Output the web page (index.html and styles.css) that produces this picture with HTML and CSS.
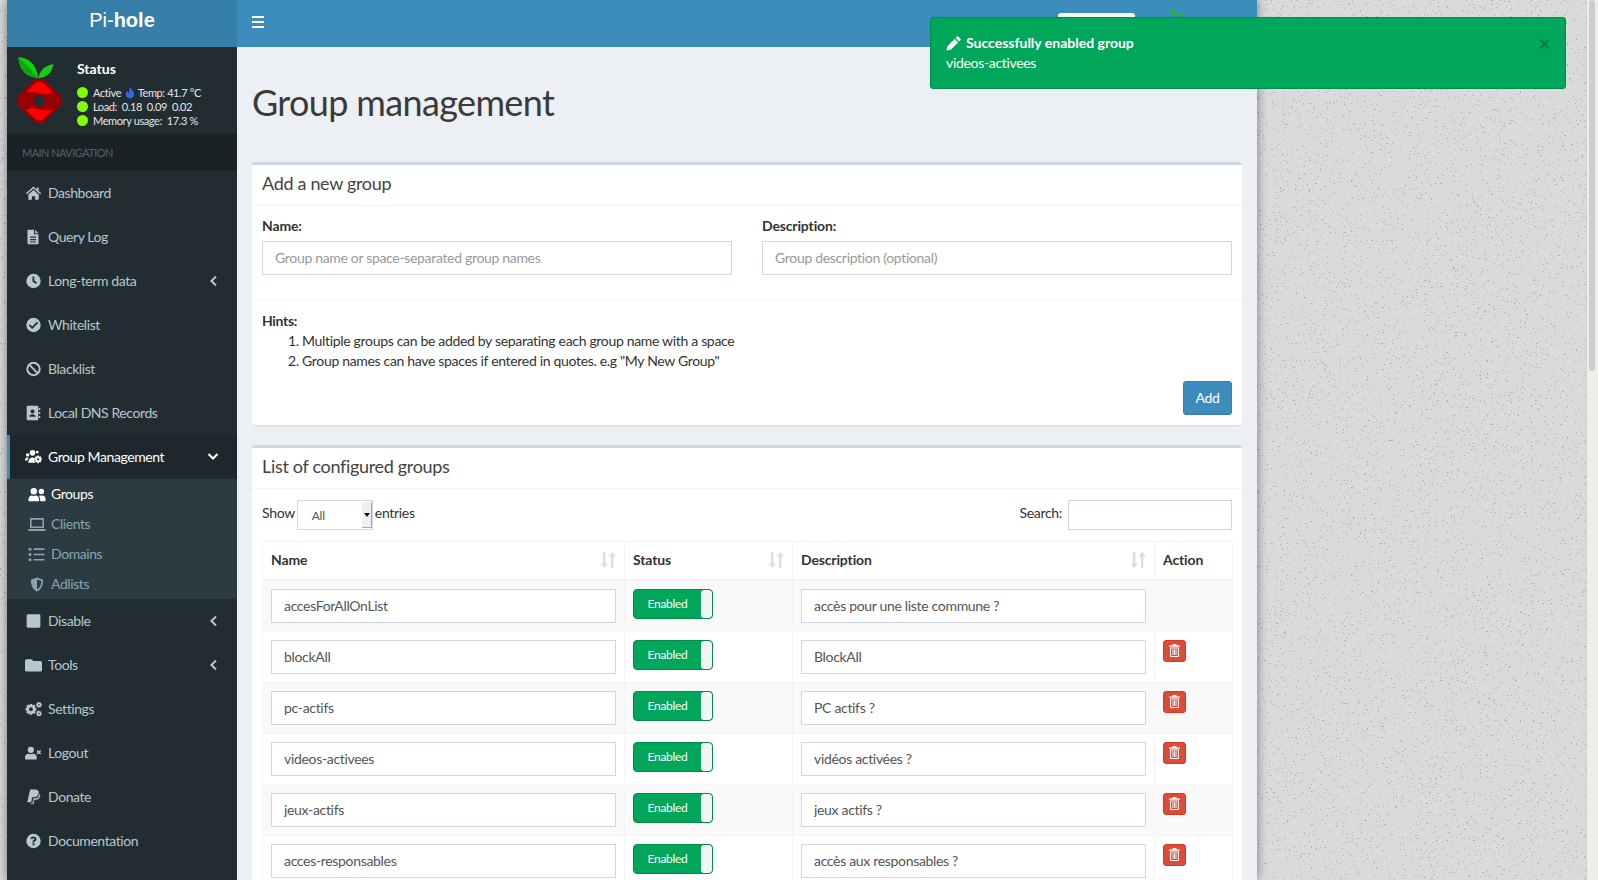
FILE: index.html
```html
<!DOCTYPE html>
<html lang="en">
<head>
  <meta charset="UTF-8">
  <title>Pi-hole - Group management</title>
  <link rel="stylesheet" href="styles.css">
</head>
<body>

<!-- speckled wall behind the boxed layout -->
<svg class="wall">
  <filter id="grain" x="0" y="0" width="100%" height="100%" color-interpolation-filters="sRGB">
    <feTurbulence type="fractalNoise" baseFrequency=".45 .65" numOctaves="2" seed="7"/>
    <feColorMatrix values="0 0 0 0 .68  0 0 0 0 .68  0 0 0 0 .68  1 0 0 0 0"/>
    <feComponentTransfer><feFuncA type="linear" slope="22" intercept="-15.300"/></feComponentTransfer>
  </filter>
  <rect width="100%" height="100%" filter="url(#grain)"/>
</svg>

<svg class="defs" width="0" height="0">
  <symbol id="i-home" viewBox="0 0 16 16"><path d="M8 1.600 .3 8.200l1 1.100L8 3.600l6.700 5.700 1-1.100-2.500-2.100V2.400h-2v2.100z"/><path d="M2.800 9.600 8 5.100l5.200 4.500v4.600a.6.6 0 0 1-.6.6H9.600v-3.600H6.400v3.600H3.400a.6.6 0 0 1-.6-.6z"/></symbol>
  <symbol id="i-file" viewBox="0 0 16 16"><path fill-rule="evenodd" d="M2 .8h6.500v4.400H13v9.200a.8.8 0 0 1-.8.8H2.800a.8.8 0 0 1-.8-.8zM4.500 7.600v1.200h6V7.600zm0 2.400v1.200h6V10zm0 2.400v1.200h6v-1.200z"/><path d="M9.600.8 13 4.200H9.600z"/></symbol>
  <symbol id="i-clock" viewBox="0 0 16 16"><path fill-rule="evenodd" d="M8 .8a7.200 7.200 0 1 0 0 14.400A7.200 7.200 0 0 0 8 .8zM7 3.600h1.800v4l2.700 2-1 1.400L7 8.600z"/></symbol>
  <symbol id="i-check" viewBox="0 0 16 16"><path fill-rule="evenodd" d="M8 .8a7.200 7.200 0 1 0 0 14.400A7.200 7.200 0 0 0 8 .8zM6.700 12 3.300 8.600l1.300-1.300 2.100 2.100 4.700-4.700 1.300 1.300z"/></symbol>
  <symbol id="i-ban" viewBox="0 0 16 16"><path fill-rule="evenodd" d="M8 .8a7.200 7.200 0 1 0 0 14.400A7.200 7.200 0 0 0 8 .8zM3.800 5.100l7.100 7.100A5.100 5.100 0 0 1 3.800 5.100zm1.300-1.300a5.100 5.100 0 0 1 7.100 7.100z"/></symbol>
  <symbol id="i-book" viewBox="0 0 16 16"><path fill-rule="evenodd" d="M2.200.8h9.600a1 1 0 0 1 1 1v12.400a1 1 0 0 1-1 1H2.200a1 1 0 0 1-1-1V1.800a1 1 0 0 1 1-1zM7 4.400a2 2 0 1 0 0 4 2 2 0 0 0 0-4zM3.800 11.800h6.400c0-1.600-1.400-2.600-3.200-2.600s-3.200 1-3.200 2.600z"/><path d="M13.300 3h1.500v2h-1.500zm0 4h1.500v2h-1.500zm0 4h1.500v2h-1.500z"/></symbol>
  <symbol id="i-userscog" viewBox="0 0 18 16"><circle cx="8" cy="3.600" r="3"/><circle cx="2.800" cy="5.800" r="1.800"/><circle cx="13" cy="2.800" r="1.500"/><path d="M3.600 14c0-3.200 1.800-5.500 4.400-5.500 1 0 1.700.2 2.300.7-.5 1.500-.3 3.200.5 4.800zM0 11.600c0-1.800.9-3.200 2.500-3.200.6 0 1 .1 1.400.5-.8 1-1.200 1.700-1.300 2.700z"/><path fill-rule="evenodd" d="m13.100 6.400 1.600 0 .3 1.300 1.100-.7 1.200 1.200-.7 1.100 1.300.3v1.700l-1.300.3.7 1.100-1.200 1.200-1.100-.7-.3 1.300h-1.600l-.3-1.300-1.100.7-1.200-1.200.7-1.100-1.300-.3V9.600l1.300-.3-.7-1.100L11.700 7l1.100.7zm.8 2.800a1.200 1.200 0 1 0 0 2.400 1.200 1.200 0 0 0 0-2.400z"/></symbol>
  <symbol id="i-users" viewBox="0 0 18 14"><circle cx="5.800" cy="3.800" r="3.200"/><circle cx="13.400" cy="4" r="2.700"/><path d="M.5 13.200v-1.400c0-2.200 1.800-3.800 3.200-3.800.7 0 1.200.4 2.100.4s1.400-.4 2.100-.4c1.400 0 3.200 1.600 3.200 3.800v1.400a.6.6 0 0 1-.6.6H1.100a.6.6 0 0 1-.6-.6zM12.200 13.800v-2c0-1.400-.5-2.500-1.300-3.300.5-.3 1-.5 1.500-.5.5 0 .6.200 1 .2s.6-.2 1-.2c1.300 0 3.100 1.200 3.100 3.100v2.100a.6.6 0 0 1-.6.6z"/></symbol>
  <symbol id="i-laptop" viewBox="0 0 18 14"><path fill-rule="evenodd" d="M3 .6h12a1 1 0 0 1 1 1v9H2v-9a1 1 0 0 1 1-1zm.6 1.600v6.800h10.800V2.200z"/><path d="M.3 11.400h17.400v1a1.200 1.200 0 0 1-1.200 1.200h-15a1.200 1.200 0 0 1-1.200-1.200z"/></symbol>
  <symbol id="i-list" viewBox="0 0 16 14"><circle cx="1.500" cy="2" r="1.400"/><circle cx="1.500" cy="7" r="1.400"/><circle cx="1.500" cy="12" r="1.400"/><path d="M4.800 1.200H15v1.500H4.800zm0 5H15v1.500H4.800zm0 5H15v1.500H4.800z"/></symbol>
  <symbol id="i-shield" viewBox="0 0 16 16"><path fill-rule="evenodd" d="M8 .5 14.500 3c0 6-2 10.500-6.500 12.500C3.500 13.500 1.500 9 1.500 3zm0 2.100v10.800c2.800-1.500 4.500-4.600 4.700-9.100z"/></symbol>
  <symbol id="i-square" viewBox="0 0 14 14"><rect x="1" y="1" width="12" height="12" rx="1.300"/></symbol>
  <symbol id="i-folder" viewBox="0 0 16 14"><path d="M1.500 1.500h4.600l1.700 1.700h6.700A1.500 1.500 0 0 1 16 4.700v7a1.500 1.500 0 0 1-1.500 1.500h-13A1.500 1.500 0 0 1 0 11.700V3a1.500 1.500 0 0 1 1.500-1.500z"/></symbol>
  <symbol id="i-cogs" viewBox="0 0 18 16"><path fill-rule="evenodd" d="m5 2.600 2.600 0 .4 1.600 1.500-.9 1.800 1.800-.9 1.500 1.600.4v2.600l-1.600.4.900 1.500-1.800 1.800-1.500-.9-.4 1.600H5l-.4-1.600-1.500.9-1.800-1.800.9-1.500L.6 9.600V7l1.600-.4-.9-1.500 1.800-1.800 1.500.9zm1.300 3.600a2.100 2.100 0 1 0 0 4.200 2.100 2.100 0 0 0 0-4.200z"/><path fill-rule="evenodd" d="M14.200.6h1.200l.2.900.9-.4.800.8-.4.900.9.200v1.200l-.9.200.4.900-.8.800-.9-.4-.2.900h-1.200l-.2-.9-.9.400-.8-.8.4-.9-.9-.2V2.800l.9-.2-.4-.9.800-.8.9.4zm.6 2.200a.8.8 0 1 0 0 1.600.8.8 0 0 0 0-1.600zM14.200 9.800h1.200l.2.900.9-.4.800.8-.4.900.9.200v1.200l-.9.200.4.900-.8.800-.9-.4-.2.900h-1.200l-.2-.9-.9.400-.8-.8.4-.9-.9-.2V12l.9-.2-.4-.9.800-.8.9.4zm.6 2.200a.8.8 0 1 0 0 1.600.8.8 0 0 0 0-1.600z"/></symbol>
  <symbol id="i-userx" viewBox="0 0 18 14"><circle cx="6.200" cy="3.600" r="3.300"/><path d="M0 13v-1.500C0 9.400 1.800 7.800 3.600 7.800c.8 0 1.300.4 2.600.4s1.800-.4 2.600-.4c1.800 0 3.600 1.600 3.600 3.700V13a1 1 0 0 1-1 1H1a1 1 0 0 1-1-1zM13.400 3.800l1.300 1.300 1.300-1.300 1.100 1.100-1.300 1.300 1.300 1.300L16 8.600l-1.300-1.300-1.300 1.300-1.100-1.100 1.300-1.300-1.300-1.300z"/></symbol>
  <symbol id="i-paypal" viewBox="0 0 14 16"><path d="M3.600.6h5c2.500 0 4 1.300 3.600 3.600-.5 2.700-2.400 4-4.900 4H5.600L4.700 13.300H.8z"/><path fill-opacity=".75" d="M12.600 4.400c1 .6 1.400 1.700 1.100 3.100-.5 2.400-2.200 3.500-4.400 3.500H8l-.7 4.200H4.200l.3-1.300h1.400l.8-5h1.700c2.500 0 3.900-1.800 4.200-4.500z"/></symbol>
  <symbol id="i-help" viewBox="0 0 16 16"><path fill-rule="evenodd" d="M8 .8a7.200 7.200 0 1 0 0 14.400A7.200 7.200 0 0 0 8 .8zM7 10.200h2v2H7zM5 5.800C5.200 4.200 6.400 3.400 8 3.400c1.700 0 3 1 3 2.600 0 1.200-.7 1.800-1.500 2.300-.5.300-.6.500-.6 1.100H7c0-1.300.4-1.900 1.200-2.400.5-.3.800-.5.800-1 0-.4-.4-.7-1-.7s-1 .3-1.100 1z"/></symbol>
  <symbol id="i-left" viewBox="0 0 8 12"><path d="M6.300.8 7.700 2.200 3.900 6l3.800 3.800-1.400 1.400L1 6z"/></symbol>
  <symbol id="i-down" viewBox="0 0 12 8"><path d="M.8 1.700 2.200.3 6 4.100 9.800.3l1.400 1.400L6 6.900z"/></symbol>
  <symbol id="i-pencil" viewBox="0 0 16 16"><path d="M11.700.6a1 1 0 0 1 1.400 0l2.300 2.300a1 1 0 0 1 0 1.400l-1.500 1.500-3.700-3.700zM9.200 3.100l3.700 3.700-7.800 7.800-3.900.9-.7-.7.900-3.900z"/></symbol>
  <symbol id="i-trash" viewBox="0 0 11 13"><path fill-rule="evenodd" d="M3.800 0h3.400l.7 1.500H11v1.200H0V1.500h3.100zM1 3.400h9v8.400a1.200 1.200 0 0 1-1.200 1.200H2.200A1.200 1.200 0 0 1 1 11.800zm1.100 1v7.300c0 .1 0 .2.200.2h6.400c.2 0 .2-.1.200-.2V4.400zM3.500 5.300h.9v5.700h-.9zm1.550 0h.9v5.700h-.9zm1.550 0h.9v5.700h-.9z"/></symbol>
  <symbol id="i-sort" viewBox="0 0 16 18"><path d="M3 1h2.400v11.500H8L4.200 17 .4 12.500H3z"/><path d="M11 17h2.400V5.500H16L12.200 1 8.400 5.500H11z"/></symbol>
</svg>

<div class="wrapper">
  <header class="top-bar">
    <a class="brand">Pi-<b>hole</b></a>
    <nav class="navbar">
      <span class="burger"><i></i><i></i><i></i></span>
      <span class="nav-pill"></span>
      <svg class="nav-leaf" viewBox="0 0 14 10"><path d="M0 0c3 0 6 2 7 7C5 8 1 5 0 0zM14 3c-1 3-2 5-5 5 0-2 2-4 5-5z"/></svg>
    </nav>
  </header>

  <div class="page">
    <aside class="sidebar">
      <div class="user-panel">
        <svg class="logo" viewBox="0 0 210 240">
          <path class="leaf" d="M25 22c28 0 54 18 60 63C50 82 28 60 25 22z"/>
          <path class="leaf-dark" d="M25 22c20 18 42 40 60 63C50 82 28 60 25 22z"/>
          <path class="leaf" d="M130 42c-3 24-18 40-45 43 5-26 20-38 45-43z"/>
          <rect class="berry-dark" x="33" y="98" width="110" height="110" rx="24" transform="rotate(45 88 153)"/>
          <circle class="berry-hole" cx="88" cy="153" r="17"/>
          <path class="berry" d="M48 126 73 101c8-8 22-8 30 0l24 24c-10 8-22 8-36 4-14-4-28-6-43-3z"/>
          <path class="berry" transform="rotate(180 88 153)" d="M48 126 73 101c8-8 22-8 30 0l24 24c-10 8-22 8-36 4-14-4-28-6-43-3z"/>
        </svg>
        <div class="status">
          <p class="status-title">Status</p>
          <p class="status-line"><i class="dot"></i>Active <svg class="flame" viewBox="0 0 12 14"><path d="M6.500 0c.5 2.500 4.500 4.500 4.500 8.500A5 5 0 0 1 1 8.500C1 6.500 2 5 3 4c0 1.500.5 2.500 1.500 3C5 4.500 5 2 6.500 0z"/></svg> Temp: 41.7 °C</p>
          <p class="status-line"><i class="dot"></i>Load:&nbsp; 0.18&nbsp; 0.09&nbsp; 0.02</p>
          <p class="status-line"><i class="dot"></i>Memory usage:&nbsp; 17.3 %</p>
        </div>
      </div>
      <div class="menu-header">MAIN NAVIGATION</div>
      <ul class="menu">
        <li class="menu-item"><svg class="ic"><use href="#i-home"/></svg>Dashboard</li>
        <li class="menu-item"><svg class="ic"><use href="#i-file"/></svg>Query Log</li>
        <li class="menu-item"><svg class="ic"><use href="#i-clock"/></svg>Long-term data<svg class="chev"><use href="#i-left"/></svg></li>
        <li class="menu-item"><svg class="ic"><use href="#i-check"/></svg>Whitelist</li>
        <li class="menu-item"><svg class="ic"><use href="#i-ban"/></svg>Blacklist</li>
        <li class="menu-item"><svg class="ic"><use href="#i-book"/></svg>Local DNS Records</li>
        <li class="menu-item active"><svg class="ic"><use href="#i-userscog"/></svg>Group Management<svg class="chev-down"><use href="#i-down"/></svg></li>
        <li>
          <ul class="submenu">
            <li class="sub-item current"><svg class="ic"><use href="#i-users"/></svg>Groups</li>
            <li class="sub-item"><svg class="ic"><use href="#i-laptop"/></svg>Clients</li>
            <li class="sub-item"><svg class="ic"><use href="#i-list"/></svg>Domains</li>
            <li class="sub-item"><svg class="ic"><use href="#i-shield"/></svg>Adlists</li>
          </ul>
        </li>
        <li class="menu-item"><svg class="ic"><use href="#i-square"/></svg>Disable<svg class="chev"><use href="#i-left"/></svg></li>
        <li class="menu-item"><svg class="ic"><use href="#i-folder"/></svg>Tools<svg class="chev"><use href="#i-left"/></svg></li>
        <li class="menu-item"><svg class="ic"><use href="#i-cogs"/></svg>Settings</li>
        <li class="menu-item"><svg class="ic"><use href="#i-userx"/></svg>Logout</li>
        <li class="menu-item"><svg class="ic"><use href="#i-paypal"/></svg>Donate</li>
        <li class="menu-item"><svg class="ic"><use href="#i-help"/></svg>Documentation</li>
      </ul>
    </aside>

    <main class="content">
      <h1 class="page-title">Group management</h1>

      <section class="card">
        <h3 class="card-title">Add a new group</h3>
        <div class="form-grid">
          <div>
            <label class="field-label">Name:</label>
            <input class="field" type="text" placeholder="Group name or space-separated group names">
          </div>
          <div>
            <label class="field-label">Description:</label>
            <input class="field" type="text" placeholder="Group description (optional)">
          </div>
        </div>
        <div class="card-foot">
          <strong>Hints:</strong>
          <ol class="hints">
            <li>Multiple groups can be added by separating each group name with a space</li>
            <li>Group names can have spaces if entered in quotes. e.g "My New Group"</li>
          </ol>
          <div class="foot-actions"><button class="btn-add">Add</button></div>
        </div>
      </section>

      <section class="card">
        <h3 class="card-title">List of configured groups</h3>
        <div class="card-body">
          <div class="table-tools">
            <div class="length">Show
              <span class="length-select"><span class="length-value">All</span><span class="length-arrow"></span></span>
              entries</div>
            <div class="search">Search: <input class="search-input" type="text"></div>
          </div>
          <table class="groups">
            <colgroup>
              <col class="col-name"><col class="col-status"><col class="col-desc"><col class="col-action">
            </colgroup>
            <thead>
              <tr>
                <th><span class="th-in">Name<svg class="sort"><use href="#i-sort"/></svg></span></th>
                <th><span class="th-in">Status<svg class="sort"><use href="#i-sort"/></svg></span></th>
                <th><span class="th-in">Description<svg class="sort"><use href="#i-sort"/></svg></span></th>
                <th>Action</th>
              </tr>
            </thead>
            <tbody>
              <tr>
                <td><input class="field" type="text" value="accesForAllOnList"></td>
                <td><span class="toggle"><span class="toggle-on">Enabled</span><span class="toggle-knob"></span></span></td>
                <td><input class="field" type="text" value="accès pour une liste commune ?"></td>
                <td></td>
              </tr>
              <tr>
                <td><input class="field" type="text" value="blockAll"></td>
                <td><span class="toggle"><span class="toggle-on">Enabled</span><span class="toggle-knob"></span></span></td>
                <td><input class="field" type="text" value="BlockAll"></td>
                <td><button class="btn-del"><svg class="trash"><use href="#i-trash"/></svg></button></td>
              </tr>
              <tr>
                <td><input class="field" type="text" value="pc-actifs"></td>
                <td><span class="toggle"><span class="toggle-on">Enabled</span><span class="toggle-knob"></span></span></td>
                <td><input class="field" type="text" value="PC actifs ?"></td>
                <td><button class="btn-del"><svg class="trash"><use href="#i-trash"/></svg></button></td>
              </tr>
              <tr>
                <td><input class="field" type="text" value="videos-activees"></td>
                <td><span class="toggle"><span class="toggle-on">Enabled</span><span class="toggle-knob"></span></span></td>
                <td><input class="field" type="text" value="vidéos activées ?"></td>
                <td><button class="btn-del"><svg class="trash"><use href="#i-trash"/></svg></button></td>
              </tr>
              <tr>
                <td><input class="field" type="text" value="jeux-actifs"></td>
                <td><span class="toggle"><span class="toggle-on">Enabled</span><span class="toggle-knob"></span></span></td>
                <td><input class="field" type="text" value="jeux actifs ?"></td>
                <td><button class="btn-del"><svg class="trash"><use href="#i-trash"/></svg></button></td>
              </tr>
              <tr>
                <td><input class="field" type="text" value="acces-responsables"></td>
                <td><span class="toggle"><span class="toggle-on">Enabled</span><span class="toggle-knob"></span></span></td>
                <td><input class="field" type="text" value="accès aux responsables ?"></td>
                <td><button class="btn-del"><svg class="trash"><use href="#i-trash"/></svg></button></td>
              </tr>
            </tbody>
          </table>
        </div>
      </section>
    </main>
  </div>
</div>

<!-- notification over the page -->
<div class="toast">
  <p class="toast-title"><svg class="toast-icon"><use href="#i-pencil"/></svg>Successfully enabled group</p>
  <p class="toast-msg">videos-activees</p>
  <span class="toast-close">×</span>
</div>

<div class="scrollbar"><div class="scroll-thumb"></div></div>

</body>
</html>
```

FILE: styles.css
```css
* {
  box-sizing: border-box;
}

html, body {
  height: 880px;
}

body {
  margin: 0;
  overflow: hidden;
  font-family: "Lato", "Noto Sans", sans-serif;
  font-size: 14px;
  line-height: 20px;
  letter-spacing: -.023em;
  color: #333;
  background-color: #dadada;
}

ul, ol, p, h1, h3 {
  margin: 0;
  padding: 0;
}

ul {
  list-style: none;
}

.wall {
  position: absolute;
  left: 0;
  top: 0;
  width: 1598px;
  height: 880px;
}

.defs {
  position: absolute;
}

.wrapper {
  position: relative;
  width: 1250px;
  height: 880px;
  margin-left: 7px;
  background: #ecf0f5;
  box-shadow: 0 0 10px rgba(0, 0, 0, .45);
  overflow: hidden;
}

/* top bar */
.top-bar {
  display: flex;
  height: 47px;
}

.brand {
  width: 230px;
  background: #367fa9;
  color: #fff;
  font-family: "Liberation Sans", sans-serif;
  font-size: 20px;
  line-height: 41px;
  letter-spacing: 0;
  text-align: center;
}

.navbar {
  flex: 1;
  display: flex;
  align-items: flex-start;
  background: #3c8dbc;
}

.burger {
  display: flex;
  flex-direction: column;
  gap: 3px;
  margin: 16px 0 0 15px;
}

.burger i {
  display: block;
  width: 12px;
  height: 2px;
  background: #fff;
}

.nav-pill {
  width: 77px;
  height: 30px;
  margin: 13px 0 0 auto;
  border-radius: 3px;
  background: #f7f5f2;
}

.nav-leaf {
  width: 14px;
  height: 10px;
  margin: 9px 73px 0 35px;
  fill: #18c318;
}

.page {
  display: flex;
  height: 833px;
}

/* sidebar */
.sidebar {
  flex: none;
  width: 230px;
  background: #222d32;
  color: #b8c7ce;
  letter-spacing: -.03em;
}

.user-panel {
  display: flex;
  height: 87px;
  padding: 3px 0 0 3px;
}

.logo {
  flex: none;
  width: 70px;
  height: 80px;
}

.leaf {
  fill: #14d014;
}

.leaf-dark {
  fill: #0ea80e;
}

.berry {
  fill: #f00;
}

.berry-dark {
  fill: #9b0000;
}

.berry-hole {
  fill: #222d32;
}

.status {
  margin-left: -3px;
  color: #fff;
  white-space: nowrap;
}

.status-title {
  font-weight: 700;
  font-size: 14px;
  line-height: 20px;
  letter-spacing: 0;
  margin-top: 9px;
  margin-bottom: 7px;
}

.status-line {
  height: 14px;
  font-size: 11px;
  line-height: 14px;
  letter-spacing: -.035em;
  color: #e6e6e6;
}

.dot {
  display: inline-block;
  width: 11px;
  height: 11px;
  margin-right: 5px;
  border-radius: 50%;
  background: #7fff00;
  vertical-align: -1px;
}

.flame {
  width: 10px;
  height: 12px;
  margin: 0 1px;
  fill: #3366e6;
  vertical-align: -2px;
}

.menu-header {
  height: 37px;
  padding-left: 15px;
  background: #1a2226;
  color: #4b646f;
  font-size: 11px;
  line-height: 37px;
  letter-spacing: -.05em;
}

.menu-item {
  display: flex;
  align-items: center;
  height: 44px;
  padding: 0 20px 0 18px;
}

.menu-item.active {
  padding-left: 15px;
  border-left: 3px solid #3c8dbc;
  background: #1e282c;
  color: #fff;
}

.ic {
  flex: none;
  width: 17px;
  height: 16px;
  margin-right: 6px;
  fill: currentColor;
}

.chev {
  width: 8px;
  height: 12px;
  margin-left: auto;
  fill: currentColor;
}

.chev-down {
  width: 12px;
  height: 8px;
  margin-left: auto;
  margin-right: -2px;
  fill: #fff;
}

.submenu {
  height: 120px;
  background: #2c3b41;
  color: #8aa4af;
}

.sub-item {
  display: flex;
  align-items: center;
  height: 30px;
  padding-left: 21px;
}

.sub-item .ic {
  width: 18px;
  height: 15px;
  margin-right: 5px;
}

.sub-item.current {
  color: #fff;
}

/* main column */
.content {
  flex: 1;
  padding: 15px;
  min-width: 0;
}

.page-title {
  margin: 20px 0 40px;
  color: #3a3a3a;
  font-size: 36px;
  font-weight: 400;
  line-height: 40px;
  letter-spacing: -.018em;
}

.card {
  margin-bottom: 20px;
  border-top: 3px solid #d2d6de;
  border-radius: 3px;
  background: #fff;
  box-shadow: 0 1px 1px rgba(0, 0, 0, .1);
}

.card-title {
  height: 41px;
  padding: 8px 10px 0;
  border-bottom: 1px solid #f4f4f4;
  color: #444;
  font-size: 18px;
  font-weight: 400;
  line-height: 20px;
}

.form-grid {
  display: grid;
  grid-template-columns: 1fr 1fr;
  gap: 30px;
  padding: 10px 10px 25px;
  height: 94px;
}

.field-label {
  display: block;
  margin-bottom: 5px;
  font-weight: 700;
  letter-spacing: -.01em;
}

.field {
  display: block;
  width: 100%;
  height: 34px;
  padding: 5px 12px 7px;
  border: 1px solid #d2d6de;
  background: #fff;
  color: #555;
  font: inherit;
  letter-spacing: inherit;
}

.field::placeholder {
  color: #999;
}

.card-foot {
  padding: 10px;
  border-top: 1px solid #f4f4f4;
}

.hints {
  padding-left: 40px;
  margin-bottom: 10px;
}

.foot-actions {
  display: flex;
  justify-content: flex-end;
}

.btn-add {
  width: 49px;
  height: 34px;
  border: 1px solid #367fa9;
  border-radius: 3px;
  background: #3c8dbc;
  color: #fff;
  font: inherit;
  letter-spacing: inherit;
}

.card-body {
  padding: 11px 10px 10px;
}

.table-tools {
  display: flex;
  justify-content: space-between;
  height: 30px;
  margin-bottom: 11px;
  line-height: 26px;
}

.length {
  display: flex;
  gap: 2px;
}

.length-select {
  display: flex;
  width: 76px;
  height: 30px;
  border: 1px solid #d2d6de;
  font-size: 12px;
  line-height: 29px;
  color: #555;
}

.length-value {
  flex: 1;
  padding-left: 14px;
}

.length-arrow {
  position: relative;
  width: 10px;
  margin: 1px 0;
  border: 1px solid #aaa;
  border-width: 0 1px 1px 0;
  background: #efefef;
}

/* little black triangle of the native select */
.length-arrow::after {
  content: "";
  position: absolute;
  left: 2px;
  top: 11px;
  border: 3px solid transparent;
  border-top: 4px solid #111;
}

.search {
  display: flex;
  gap: 6px;
}

.search-input {
  width: 164px;
  height: 30px;
  border: 1px solid #d2d6de;
  background: #fff;
}

.groups {
  width: 970px;
  table-layout: fixed;
  border-collapse: collapse;
}

.col-name { width: 362px; }
.col-status { width: 168px; }
.col-desc { width: 362px; }
.col-action { width: 78px; }

.groups th,
.groups td {
  padding: 8px;
  border: 1px solid #f4f4f4;
  vertical-align: top;
  text-align: left;
}

.groups th {
  height: 38px;
  border-bottom-width: 2px;
  color: #333;
  font-weight: 700;
  letter-spacing: -.01em;
}

.th-in {
  display: flex;
  align-items: center;
  justify-content: space-between;
}

.sort {
  width: 16px;
  height: 18px;
  fill: #ddd;
}

.groups tbody tr:nth-child(odd) {
  background: #f9f9f9;
}

.groups td {
  height: 51px;
}

.groups .field {
  padding: 6px 12px;
}

.toggle {
  display: flex;
  width: 80px;
  height: 30px;
  border: 1px solid #008d4c;
  border-radius: 4px;
  background: #00a65a;
  color: #fff;
  font-size: 12px;
  line-height: 28px;
  overflow: hidden;
}

.toggle-on {
  flex: 1;
  text-align: center;
}

.toggle-knob {
  width: 11px;
  border-radius: 3px;
  background: #f4f4f4;
}

.btn-del {
  display: block;
  width: 23px;
  height: 22px;
  padding: 0;
  border: 1px solid #d73925;
  border-radius: 3px;
  background: #dd4b39;
}

.trash {
  display: block;
  width: 11px;
  height: 13px;
  margin: auto;
  fill: #fff;
}

/* notification */
.toast {
  position: absolute;
  left: 930px;
  top: 17px;
  width: 636px;
  height: 72px;
  padding: 15px;
  border: 1px solid #008d4c;
  border-radius: 3px;
  background: #00a65a;
  color: #fff;
}

.toast-title {
  display: flex;
  align-items: center;
  font-weight: 700;
  letter-spacing: 0;
}

.toast-icon {
  width: 15px;
  height: 15px;
  margin-right: 5px;
  fill: #fff;
}

.toast-close {
  position: absolute;
  right: 15px;
  top: 15px;
  color: rgba(0, 0, 0, .3);
  font-size: 20px;
  font-weight: 700;
}

/* fake page scrollbar */
.scrollbar {
  position: absolute;
  right: 0;
  top: 0;
  width: 12px;
  height: 880px;
  border-left: 1px solid #d5cec6;
  background: #eeeeec;
}

.scroll-thumb {
  width: 6px;
  height: 371px;
  margin-left: 2px;
  border-radius: 3px;
  background: #cdcdcd;
}
```
